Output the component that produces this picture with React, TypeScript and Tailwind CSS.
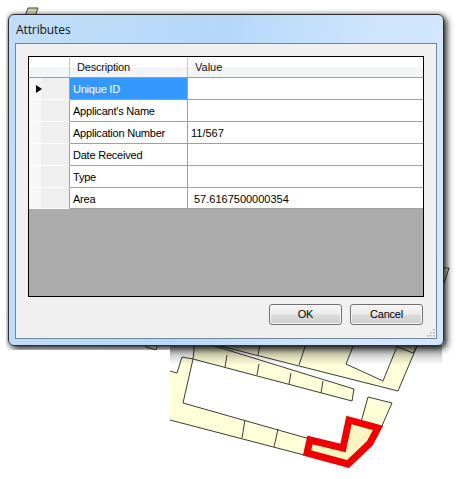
import React from 'react';

const ROWS = [
  { name: 'Unique ID', value: '' },
  { name: "Applicant's Name", value: '' },
  { name: 'Application Number', value: '11/567' },
  { name: 'Date Received', value: '' },
  { name: 'Type', value: '' },
  { name: 'Area', value: '57.6167500000354', indent: true },
];

const LINE = '#3d3d35';
const LOT = '#fefed8';

// the parcel map behind the dialog
const ParcelMap = () => (
  <svg className="absolute left-0 top-0" width="458" height="479" viewBox="0 0 458 479">
    <defs>
      <linearGradient id="fade" x1="0" y1="0" x2="0" y2="1">
        <stop offset="0" stopColor="#000" stopOpacity="0.35" />
        <stop offset="1" stopColor="#000" stopOpacity="0" />
      </linearGradient>
    </defs>
    <g stroke={LINE} strokeWidth="1" fill={LOT}>
      <polygon points="25,16 28,8 38,8 35,16" fill="#d8d4b0" />
      <polygon points="143,344 158,344 156,350 146,347" />
      <polygon points="220,340 420,340 417,346 398,391 220,346" />
      <polygon points="346,364 383,381 398,344 354,344" fill="#fff" />
      <path d="M260,344 L258,355 M306,344 L299,365 M398,347 L413,353 M417,346 L413,353" fill="none" />
      <polygon points="195,340 354,389 352,401 193,359" />
      <path d="M227,355 L225,367 M259,364 L257,375 M291,373 L289,384 M323,381 L321,393" fill="none" />
      <polygon points="170,371 177,373 182,357 193,359 183,403 310,439 304,455 170,420" stroke="none" />
      <path d="M170,371 L177,373 L182,357 L193,359 L183,403 L310,439 M170,420 L304,455 M245,420 L242,438 M278,429 L274,447" fill="none" />
      <polygon points="368,397 392,403 381,428 361,422" />
      <polygon points="443,268 449,268 443,286" />
    </g>
    <polygon
      points="310,440 343,448 349,420 378,428 370,443 348,464 307,453"
      fill="#fdf6c3"
      stroke="#f00000"
      strokeWidth="7"
      strokeLinejoin="miter"
    />
    <rect x="170" y="345" width="272" height="20" fill="url(#fade)" />
  </svg>
);

const ResizeGrip = () => (
  <svg className="absolute right-[1px] bottom-[1px]" width="9" height="9" viewBox="0 0 9 9">
    {[[7, 1], [4, 4], [7, 4], [1, 7], [4, 7], [7, 7]].map(([x, y]) => (
      <rect key={`${x}-${y}`} x={x} y={y} width="1.5" height="1.5" fill="#a9a9a9" />
    ))}
  </svg>
);

const DialogButton = ({ label }: { label: string }) => (
  <button className="w-[73px] h-[21px] rounded-[3px] border border-[#707070] bg-[linear-gradient(to_bottom,#f4f4f4_0%,#ebebeb_48%,#dcdcdc_52%,#cfcfcf_100%)] shadow-[inset_0_0_0_1px_#f7f7f7] text-[11px] tracking-[-0.2px] leading-[19px] text-black text-center">
    {label}
  </button>
);

const GridRow = ({ name, value, indent, selected }: { name: string; value: string; indent?: boolean; selected: boolean }) => (
  <div className="flex h-[22px] last:h-[21px] bg-white">
    <div className="relative w-[41px] shrink-0 border-r border-[#a0a0a0] border-b-[#fbfbfb] border-b bg-[linear-gradient(to_right,#f7f7f7_0%,#f7f7f7_30%,#efefef_30%,#efefef_100%)]">
      {selected && (
        <div className="absolute left-[7px] top-[7px] w-0 h-0 border-y-[4px] border-y-transparent border-l-[6px] border-l-black" />
      )}
    </div>
    <div className={`w-[118px] shrink-0 border-r border-b border-[#a0a0a0] pl-[3px] pt-[1px] text-[11px] tracking-[-0.22px] leading-[20px] ${selected ? 'bg-[#3399ff] text-white' : 'text-black'}`}>
      {name}
    </div>
    <div className={`flex-1 border-b border-[#a0a0a0] pt-[1px] text-[11px] leading-[20px] text-black ${indent ? 'pl-[6px]' : 'pl-[3px]'}`}>{value}</div>
  </div>
);

export default function App() {
  return (
    <div className="relative w-[458px] h-[479px] overflow-hidden bg-white font-['Liberation_Sans',sans-serif]">
      <ParcelMap />

      {/* clip for the window's shadow, the capture stops at these edges */}
      <div className="absolute left-[6px] top-[9px] w-[452px] h-[360px] overflow-hidden">
        <div className="ml-[2px] mt-[5px] w-[436px] h-[332px] rounded-[6px] border border-[#2b2f33] bg-[linear-gradient(100deg,#c2def7_0%,#b5d8f9_45%,#cfe5fc_75%,#d3e8fd_100%)] shadow-[3px_3px_7px_rgba(0,0,0,0.8),0_0_5px_rgba(0,0,0,0.4)] px-[6px] pb-[6px] flex flex-col">
          <div className="h-[28px] shrink-0 pl-[1px] pt-[6px] text-[12px] tracking-[-0.1px] leading-[17px] text-[#111] font-['Open_Sans',sans-serif]">
            Attributes
          </div>
          <div className="relative flex-1 border border-[#6f8797] bg-[#f0f0f0] px-[12px] pt-[12px] flex flex-col">
            <div className="h-[241px] border border-black bg-[#ababab]">
              <div className="flex h-[21px] border-b border-[#a0a0a0] bg-[linear-gradient(to_bottom,#ffffff_0%,#ffffff_50%,#f3f4f5_50%,#f3f4f5_100%)]">
                <div className="w-[41px] shrink-0 border-r border-[#c6c6c6]" />
                <div className="w-[118px] shrink-0 border-r border-[#c6c6c6] pl-[7px] pt-[1px] text-[11px] tracking-[-0.2px] leading-[19px] text-[#111]">
                  Description
                </div>
                <div className="flex-1 pl-[7px] pt-[1px] text-[11px] leading-[19px] text-[#111]">Value</div>
              </div>
              {ROWS.map((row, idx) => (
                <GridRow key={row.name} name={row.name} value={row.value} indent={row.indent} selected={idx === 0} />
              ))}
            </div>
            <div className="flex justify-end gap-[8px] pt-[7px] pr-[1px]">
              <DialogButton label="OK" />
              <DialogButton label="Cancel" />
            </div>
            <ResizeGrip />
          </div>
        </div>
      </div>

      {/* the capture holds no map or shadow left of here below the window */}
      <div className="absolute left-0 top-[350px] w-[170px] h-[30px] bg-white" />
    </div>
  );
}
